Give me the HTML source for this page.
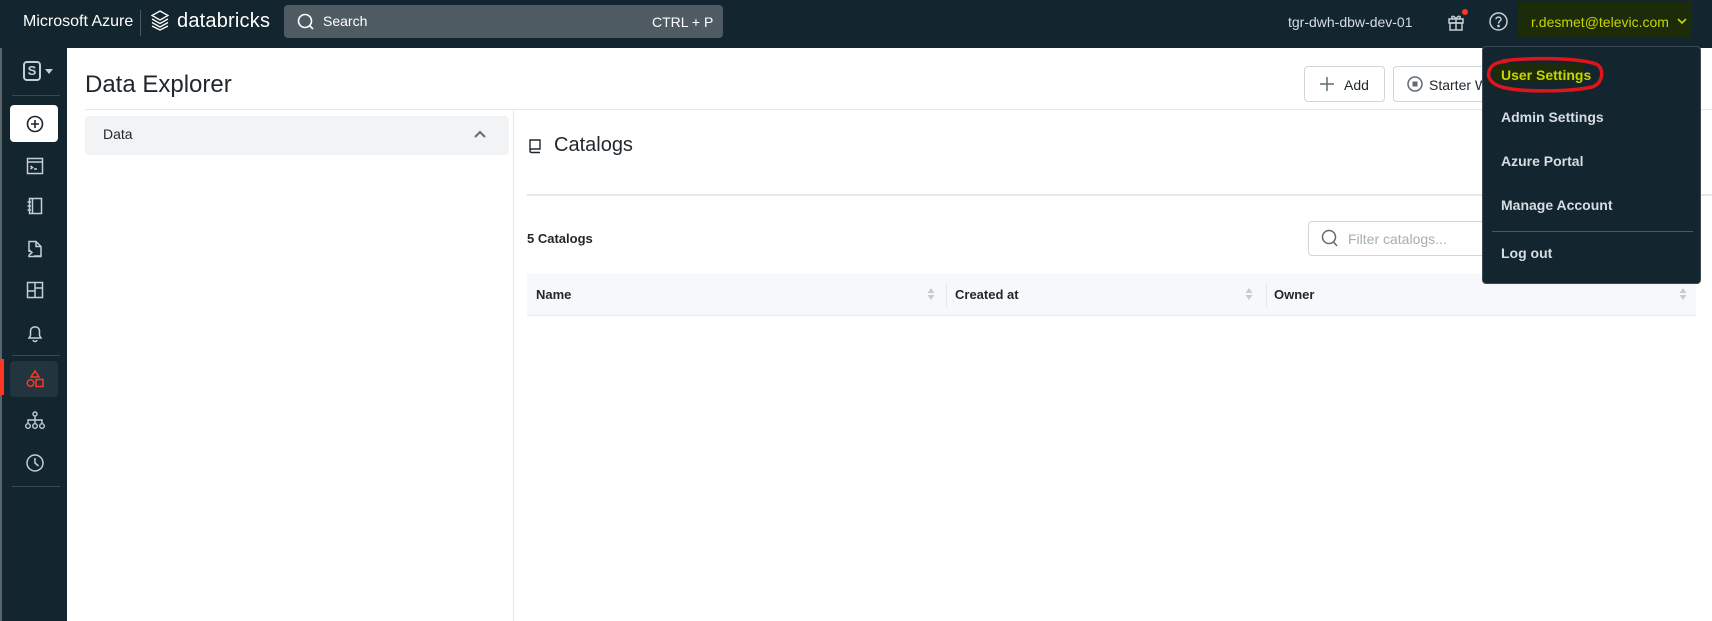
<!DOCTYPE html>
<html><head><meta charset="utf-8"><style>
*{box-sizing:border-box;margin:0;padding:0}
body{width:1712px;height:621px;overflow:hidden;background:#fff;font-family:"Liberation Sans",sans-serif;position:relative;color:#1f272d}
.a{position:absolute}
#top{left:0;top:0;width:1712px;height:48px;background:#13252e}
#side{left:0;top:48px;width:67px;height:573px;background:#13252e;border-left:2px solid #5a656b}
.ic{position:absolute;left:22px;width:22px;height:22px}
.sep{position:absolute;left:10px;width:48px;height:1px;background:#3b4a52}
.menu div{position:absolute;left:18px;color:#d6dde2;font-size:14px;font-weight:bold}
</style></head><body>
<div id="top" class="a">
 <div class="a" style="left:23px;top:13px;color:#fff;font-size:16px">Microsoft Azure</div>
 <div class="a" style="left:140px;top:10px;width:1px;height:26px;background:#4a5860"></div>
 <svg class="a" style="left:150px;top:9px" width="20" height="22" viewBox="0 0 20 22" fill="none" stroke="#fff" stroke-width="1.3"><path d="M10 2 L18 6.5 L10 11 L2 6.5 Z"/><path d="M2 10 L10 14.5 L18 10"/><path d="M2 13.5 L10 18 L18 13.5"/><path d="M2 17 L10 21 L18 17"/></svg>
 <div class="a" style="left:177px;top:10px;color:#fff;font-size:20px;letter-spacing:0.2px">databricks</div>
 <div class="a" style="left:284px;top:5px;width:439px;height:33px;background:#4f5b62;border-radius:4px"></div>
 <svg class="a" style="left:296px;top:12px" width="20" height="20" viewBox="0 0 20 20" fill="none" stroke="#fff" stroke-width="1.6"><circle cx="9" cy="9" r="6.5"/><path d="M13.5 13.5 L17 17"/></svg>
 <div class="a" style="left:323px;top:13px;color:#fff;font-size:14px">Search</div>
 <div class="a" style="left:652px;top:14px;color:#fff;font-size:14px">CTRL + P</div>
 <div class="a" style="left:1288px;top:14px;color:#d6dde2;font-size:14px">tgr-dwh-dbw-dev-01</div>
 <svg class="a" style="left:1446px;top:12px" width="20" height="20" viewBox="0 0 20 20" fill="none" stroke="#c5ced3" stroke-width="1.5"><rect x="3" y="7" width="14" height="4"/><rect x="4" y="11" width="12" height="7"/><path d="M10 7 V18"/><path d="M10 7 C7 2 4 5 7 7 M10 7 C13 2 16 5 13 7"/></svg>
 <div class="a" style="left:1462px;top:9px;width:6px;height:6px;border-radius:3px;background:#ff3621"></div>
 <svg class="a" style="left:1488px;top:11px" width="21" height="21" viewBox="0 0 21 21" fill="none" stroke="#c5ced3" stroke-width="1.5"><circle cx="10.5" cy="10.5" r="8.5"/><path d="M8 8.2 C8 5.5 13 5.5 13 8.2 C13 10 10.5 10 10.5 12.5"/><circle cx="10.5" cy="15" r="0.6" fill="#c5ced3"/></svg>
 <div class="a" style="left:1518px;top:2px;width:174px;height:35px;background:#1c2b0a"></div>
 <div class="a" style="left:1531px;top:14px;color:#c9d400;font-size:14px">r.desmet@televic.com</div>
 <svg class="a" style="left:1677px;top:17px" width="10" height="8" viewBox="0 0 10 8" fill="none" stroke="#c9d400" stroke-width="1.6"><path d="M1 2 L5 6 L9 2"/></svg>
</div>
<div id="side" class="a">
 <div class="a" style="left:21px;top:13px;width:18px;height:20px;border:2px solid #c5ced3;border-radius:4px;color:#c5ced3;font-size:13px;font-weight:bold;text-align:center;line-height:16px">S</div>
 <div class="a" style="left:43px;top:21px;width:0;height:0;border-left:4px solid transparent;border-right:4px solid transparent;border-top:5px solid #c5ced3"></div>
 <div class="sep" style="top:47px"></div>
 <div class="a" style="left:8px;top:57px;width:48px;height:37px;background:#fff;border-radius:4px"></div>
 <svg class="ic" style="top:65px" viewBox="0 0 22 22" fill="none" stroke="#1f272d" stroke-width="1.6"><circle cx="11" cy="11" r="7.5"/><path d="M11 7 V15 M7 11 H15"/></svg>
 <svg class="ic" style="top:107px" viewBox="0 0 22 22" fill="none" stroke="#c5ced3" stroke-width="1.5"><rect x="3.5" y="3.5" width="15" height="15"/><path d="M3.5 7 H18.5 M6.5 11 L8.5 12.5 L6.5 14 M10 14 H13"/></svg>
 <svg class="ic" style="top:147px" viewBox="0 0 22 22" fill="none" stroke="#c5ced3" stroke-width="1.5"><rect x="5.5" y="3.5" width="12" height="15"/><path d="M8.5 3.5 V18.5 M3.5 7 H7 M3.5 11 H7 M3.5 15 H7"/></svg>
 <svg class="ic" style="top:190px" viewBox="0 0 22 22" fill="none" stroke="#c5ced3" stroke-width="1.5"><path d="M5 14 V3.5 H12 L17 8.5 V18.5 H5 V17 M12 3.5 V8.5 H17"/><path d="M5 12 L8 14.5 L5 17 M10 18 H17"/></svg>
 <svg class="ic" style="top:231px" viewBox="0 0 22 22" fill="none" stroke="#c5ced3" stroke-width="1.5"><rect x="3.5" y="3.5" width="15" height="15"/><path d="M11 3.5 V18.5 M3.5 12 H11 M11 9 H18.5"/></svg>
 <svg class="ic" style="top:274px" viewBox="0 0 22 22" fill="none" stroke="#c5ced3" stroke-width="1.5"><path d="M5 16 H17 L15.5 13.5 V9 C15.5 3.5 6.5 3.5 6.5 9 V13.5 Z M9 18 C9.5 20 12.5 20 13 18"/></svg>
 <div class="sep" style="top:307px"></div>
 <div class="a" style="left:8px;top:313px;width:48px;height:36px;background:#22343d;border-radius:4px"></div>
 <div class="a" style="left:-2px;top:311px;width:4px;height:36px;background:#ff3621"></div>
 <svg class="ic" style="top:320px" viewBox="0 0 22 22" fill="none" stroke="#ff3621" stroke-width="1.5"><path d="M11 3 L15 9 H7 Z"/><circle cx="6.5" cy="15" r="3.3"/><rect x="12" y="11.5" width="7" height="7"/></svg>
 <svg class="ic" style="top:362px" viewBox="0 0 22 22" fill="none" stroke="#c5ced3" stroke-width="1.4"><circle cx="11" cy="4" r="2"/><path d="M11 6 V10 M4 13 V10 H18 V13 M11 10 V13"/><circle cx="4" cy="16" r="2.3"/><circle cx="11" cy="16" r="2.3"/><circle cx="18" cy="16" r="2.3"/></svg>
 <svg class="ic" style="top:404px" viewBox="0 0 22 22" fill="none" stroke="#c5ced3" stroke-width="1.5"><circle cx="11" cy="11" r="8"/><path d="M11 6 V11 L14.5 14"/></svg>
 <div class="sep" style="top:438px"></div>
</div>
<div class="a" style="left:85px;top:71px;font-size:24px;color:#1f272d">Data Explorer</div>
<div class="a" style="left:1304px;top:66px;width:81px;height:36px;border:1px solid #cfd6db;border-radius:4px"></div>
<svg class="a" style="left:1318px;top:75px" width="18" height="18" viewBox="0 0 18 18" stroke="#5f6b72" stroke-width="1.5"><path d="M9 2 V16 M2 9 H16"/></svg>
<div class="a" style="left:1344px;top:77px;font-size:14px;color:#1f272d">Add</div>
<div class="a" style="left:1393px;top:66px;width:120px;height:36px;border:1px solid #cfd6db;border-radius:4px"></div>
<svg class="a" style="left:1406px;top:75px" width="18" height="18" viewBox="0 0 18 18"><circle cx="9" cy="9" r="7" fill="none" stroke="#5f6b72" stroke-width="1.5"/><rect x="6.5" y="6.5" width="5" height="5" fill="#5f6b72"/></svg>
<div class="a" style="left:1429px;top:77px;font-size:14px;color:#1f272d">Starter W</div>
<div class="a" style="left:85px;top:109px;width:1627px;height:1px;background:#e4e8eb"></div>
<div class="a" style="left:85px;top:116px;width:424px;height:39px;background:#f1f3f5;border-radius:4px"></div>
<div class="a" style="left:103px;top:126px;font-size:14px;color:#1f272d">Data</div>
<svg class="a" style="left:474px;top:130px" width="12" height="8" viewBox="0 0 12 8" fill="none" stroke="#5f6b72" stroke-width="2"><path d="M1 7 L6 2 L11 7"/></svg>
<div class="a" style="left:513px;top:110px;width:1px;height:511px;background:#e4e8eb"></div>
<svg class="a" style="left:528px;top:138px" width="14" height="16" viewBox="0 0 14 16" fill="none" stroke="#1f272d" stroke-width="1.4"><path d="M2 13 V2 H12 V11 H3.5 C1.5 11 1.5 14.5 3.5 14.5 H12"/></svg>
<div class="a" style="left:554px;top:134px;font-size:20px;color:#1f272d">Catalogs</div>
<div class="a" style="left:527px;top:194px;width:1185px;height:2px;background:#e4e8eb"></div>
<div class="a" style="left:527px;top:231px;font-size:13px;font-weight:bold;color:#1f272d">5 Catalogs</div>
<div class="a" style="left:1308px;top:221px;width:200px;height:35px;border:1px solid #cfd6db;border-radius:4px"></div>
<svg class="a" style="left:1321px;top:229px" width="18" height="19" viewBox="0 0 18 19" fill="none" stroke="#5f6b72" stroke-width="1.5"><circle cx="8" cy="8" r="6.5"/><path d="M12.5 13 L16 17"/></svg>
<div class="a" style="left:1348px;top:231px;font-size:14px;color:#a4afb6">Filter catalogs...</div>
<div class="a" style="left:527px;top:274px;width:1169px;height:42px;background:#f7f8f9;border-bottom:1px solid #e8ebed"></div>
<div class="a" style="left:536px;top:287px;font-size:13px;font-weight:bold;color:#1f272d">Name</div>
<div class="a" style="left:955px;top:287px;font-size:13px;font-weight:bold;color:#1f272d">Created at</div>
<div class="a" style="left:1274px;top:287px;font-size:13px;font-weight:bold;color:#1f272d">Owner</div>
<div class="a" style="left:946px;top:283px;width:1px;height:24px;background:#e4e8eb"></div>
<div class="a" style="left:1266px;top:283px;width:1px;height:24px;background:#e4e8eb"></div>
<svg class="a" style="left:927px;top:287px" width="8" height="14" viewBox="0 0 8 14" fill="#c5ccd1"><path d="M4 1 L7.5 6 H0.5 Z M4 13 L7.5 8 H0.5 Z"/></svg>
<svg class="a" style="left:1245px;top:287px" width="8" height="14" viewBox="0 0 8 14" fill="#c5ccd1"><path d="M4 1 L7.5 6 H0.5 Z M4 13 L7.5 8 H0.5 Z"/></svg>
<svg class="a" style="left:1679px;top:287px" width="8" height="14" viewBox="0 0 8 14" fill="#c5ccd1"><path d="M4 1 L7.5 6 H0.5 Z M4 13 L7.5 8 H0.5 Z"/></svg>
<div class="a menu" style="left:1482px;top:46px;width:219px;height:238px;background:#13252e;border:1px solid #3b4a52;border-radius:4px">
 <div style="top:16px;left:10px;width:90px;height:18px;background:#1c2b0a"></div>
 <div style="top:20px;color:#c9d400">User Settings</div>
 <div style="top:62px">Admin Settings</div>
 <div style="top:106px">Azure Portal</div>
 <div style="top:150px">Manage Account</div>
 <div style="top:184px;left:9px;width:201px;height:1px;background:#4a5860"></div>
 <div style="top:198px">Log out</div>
</div>
<svg class="a" style="left:1484px;top:56px" width="122" height="42" viewBox="0 0 122 42" fill="none" stroke="#e0151b" stroke-width="3.5"><path d="M18 5 C50 1 95 2 112 8 C121 12 119 28 108 31 C85 36 40 36 22 32 C6 29 2 20 6 13 C9 7 15 6 24 5"/></svg>
</body></html>
